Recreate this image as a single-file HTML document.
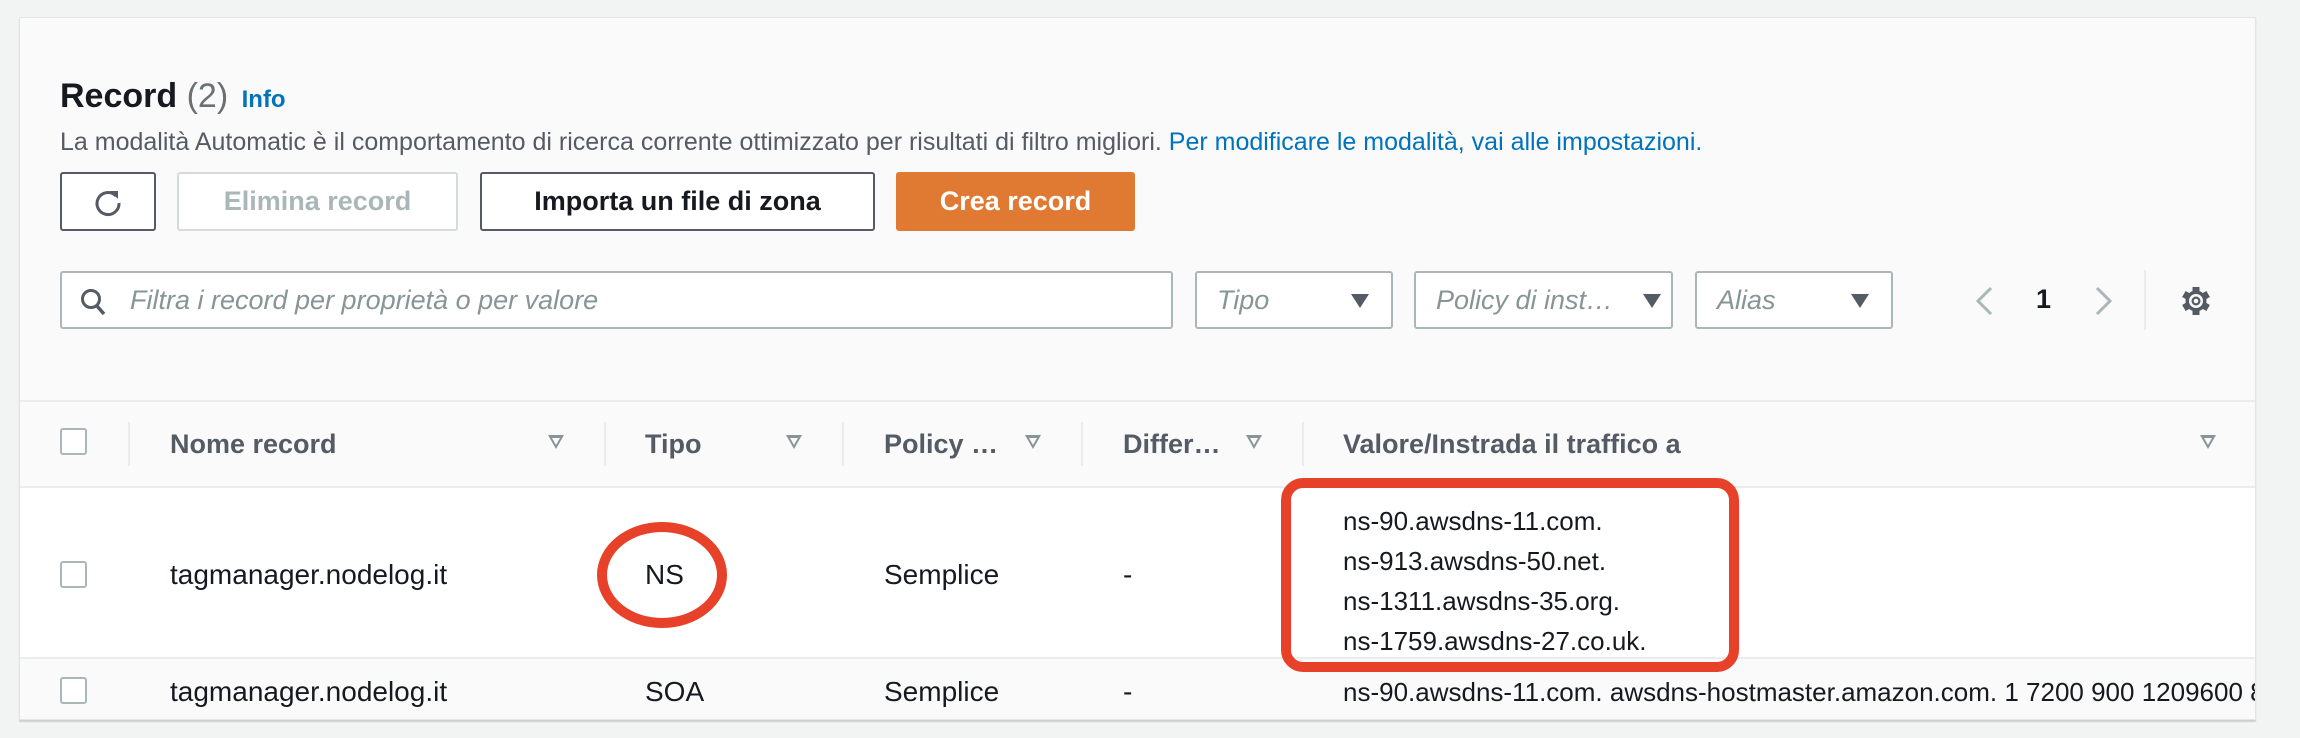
<!DOCTYPE html>
<html><head><meta charset="utf-8"><style>
*{box-sizing:border-box;margin:0;padding:0}
body{width:2300px;height:738px;background:#f2f3f3;font-family:"Liberation Sans",sans-serif;position:relative;overflow:hidden;color:#16191f}
.a{position:absolute;white-space:nowrap}
#panel{position:absolute;left:19px;top:17px;width:2237px;height:703px;background:#fafafa;border:1px solid #e4e6e6;box-shadow:0 2px 1px rgba(0,0,0,.15)}
.btn{position:absolute;top:172px;height:59px;border:2px solid #545b64;border-radius:3px;background:#fff;font-weight:bold;font-size:27px;color:#545b64;display:flex;align-items:center;justify-content:center}
.sel{position:absolute;top:271px;height:58px;border:2px solid #aab7b8;border-radius:3px;background:#fff;font-style:italic;font-size:27px;color:#879596;display:flex;align-items:center;padding-left:20px;overflow:hidden;white-space:nowrap}
.tri{position:absolute;right:22px;top:21px;width:0;height:0;border-left:9px solid transparent;border-right:9px solid transparent;border-top:14px solid #545b64}
.th{font-weight:bold;font-size:27px;line-height:32px;color:#545b64;top:428px}
.sort{position:absolute;top:435px;width:0;height:0;border-left:8px solid transparent;border-right:8px solid transparent;border-top:14px solid #879596}
.sort:after{content:"";position:absolute;left:-4px;top:-11px;border-left:4px solid transparent;border-right:4px solid transparent;border-top:7px solid #fafafa}
.div{position:absolute;top:422px;width:2px;height:44px;background:#eaeded}
.cb{position:absolute;left:60px;width:27px;height:27px;border:2px solid #aab7b8;border-radius:3px;background:#fff}
.td{font-size:28px;line-height:32px;color:#16191f}
</style></head><body>
<div id="panel"></div>
<div class="a" style="left:60px;top:77px;font-size:34px;font-weight:bold">Record <span style="font-weight:normal;color:#687078">(2)</span> <span style="font-size:24px;color:#0073bb;font-weight:bold;margin-left:4px">Info</span></div>
<div class="a" style="left:60px;top:127px;font-size:25px;line-height:30px;color:#545b64">La modalità Automatic è il comportamento di ricerca corrente ottimizzato per risultati di filtro migliori. <span style="color:#0073bb">Per modificare le modalità, vai alle impostazioni.</span></div>
<div class="btn" style="left:60px;width:96px"><svg width="30" height="30" viewBox="0 0 30 30"><path d="M23 9 A11 11 0 1 0 26 16" fill="none" stroke="#545b64" stroke-width="3"/><path d="M17 4 L25 4 L25 12 Z" fill="#545b64"/></svg></div>
<div class="btn" style="left:177px;width:281px;border-color:#d5dbdb;color:#aab7b8">Elimina record</div>
<div class="btn" style="left:480px;width:395px;color:#16191f">Importa un file di zona</div>
<div class="btn" style="left:896px;width:239px;color:#fff;background:#e07a33;border-color:#e07a33">Crea record</div>
<div class="sel" style="left:60px;width:1113px;padding-left:68px"><svg class="a" style="left:18px;top:15px" width="26" height="28" viewBox="0 0 26 28"><circle cx="11" cy="11" r="8.5" fill="none" stroke="#545b64" stroke-width="3"/><path d="M17 18 L24 26" stroke="#545b64" stroke-width="3.5"/></svg>Filtra i record per proprietà o per valore</div>
<div class="sel" style="left:1195px;width:198px">Tipo<div class="tri"></div></div>
<div class="sel" style="left:1414px;width:259px">Policy di inst…<div class="tri" style="right:10px"></div></div>
<div class="sel" style="left:1695px;width:198px">Alias<div class="tri"></div></div>
<svg class="a" style="left:1972px;top:285px" width="24" height="32" viewBox="0 0 24 32"><path d="M19 3 L6 16 L19 29" fill="none" stroke="#aab7b8" stroke-width="3"/></svg>
<div class="a" style="left:2036px;top:284px;font-size:27px;font-weight:bold">1</div>
<svg class="a" style="left:2092px;top:285px" width="24" height="32" viewBox="0 0 24 32"><path d="M5 3 L18 16 L5 29" fill="none" stroke="#aab7b8" stroke-width="3"/></svg>
<div class="a" style="left:2144px;top:270px;width:2px;height:60px;background:#eaeded"></div>
<svg class="a" style="left:2180px;top:285px" width="32" height="32" viewBox="0 0 32 32"><g transform="translate(16 16)" fill="#545b64"><g id="t"><rect x="-3.5" y="-14" width="7" height="6"/></g><use href="#t" transform="rotate(60)"/><use href="#t" transform="rotate(120)"/><use href="#t" transform="rotate(180)"/><use href="#t" transform="rotate(240)"/><use href="#t" transform="rotate(300)"/><circle r="10.5"/><circle r="7" fill="#fafafa"/><circle r="4.5"/><circle r="2.3" fill="#fafafa"/></g></svg>
<div class="a" style="left:20px;top:400px;width:2235px;height:2px;background:#eaeded"></div>
<div class="a" style="left:20px;top:486px;width:2235px;height:173px;background:#fff;border-top:2px solid #eaeded;border-bottom:2px solid #eaeded"></div>
<div class="cb" style="top:428px"></div>
<div class="div" style="left:128px"></div><div class="div" style="left:604px"></div><div class="div" style="left:842px"></div><div class="div" style="left:1081px"></div><div class="div" style="left:1302px"></div>
<div class="a th" style="left:170px">Nome record</div><div class="sort" style="left:548px"></div>
<div class="a th" style="left:645px">Tipo</div><div class="sort" style="left:786px"></div>
<div class="a th" style="left:884px">Policy …</div><div class="sort" style="left:1025px"></div>
<div class="a th" style="left:1123px">Differ…</div><div class="sort" style="left:1246px"></div>
<div class="a th" style="left:1343px">Valore/Instrada il traffico a</div><div class="sort" style="left:2200px"></div>
<div class="cb" style="top:561px"></div>
<div class="a td" style="left:170px;top:559px">tagmanager.nodelog.it</div>
<div class="a td" style="left:645px;top:559px">NS</div>
<div class="a td" style="left:884px;top:559px">Semplice</div>
<div class="a td" style="left:1123px;top:559px">-</div>
<div class="a td" style="left:1343px;top:501px;line-height:40px;font-size:26px">ns-90.awsdns-11.com.<br>ns-913.awsdns-50.net.<br>ns-1311.awsdns-35.org.<br>ns-1759.awsdns-27.co.uk.</div>
<div class="cb" style="top:677px"></div>
<div class="a td" style="left:170px;top:676px">tagmanager.nodelog.it</div>
<div class="a td" style="left:645px;top:676px">SOA</div>
<div class="a td" style="left:884px;top:676px">Semplice</div>
<div class="a td" style="left:1123px;top:676px">-</div>
<div class="a td" style="left:1343px;top:676px;width:912px;overflow:hidden;font-size:26px">ns-90.awsdns-11.com. awsdns-hostmaster.amazon.com. 1 7200 900 1209600 86400</div>
<div class="a" style="left:597px;top:522px;width:130px;height:106px;border:10px solid #e8412a;border-radius:50%"></div>
<div class="a" style="left:1281px;top:478px;width:458px;height:194px;border:10px solid #e8412a;border-radius:22px"></div>
</body></html>
